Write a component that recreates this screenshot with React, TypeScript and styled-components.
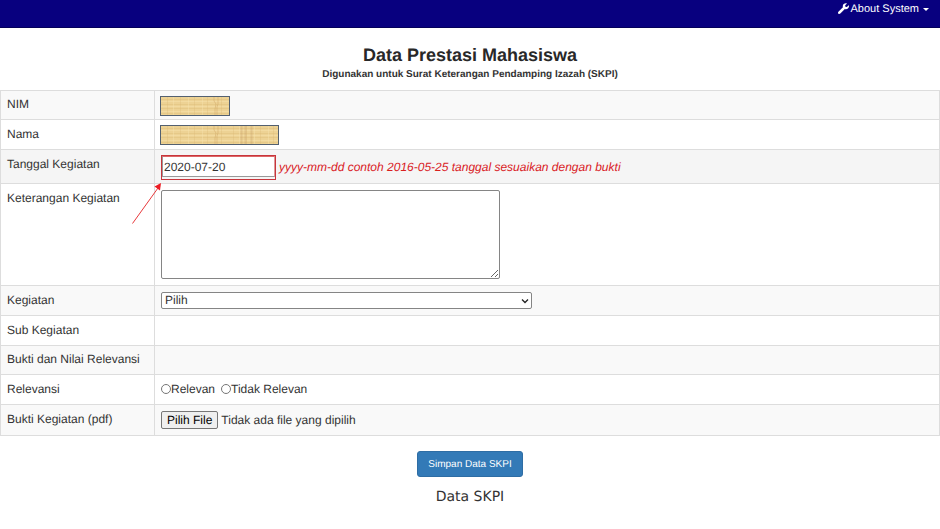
import React, { useRef, useState } from "react";
import styled, { createGlobalStyle } from "styled-components";

const GlobalStyle = createGlobalStyle`
  *, *::before, *::after { box-sizing: border-box; }
  body {
    margin: 0;
    background: #fff;
    color: #333;
    font: 12px/17px "Liberation Sans", Arial, sans-serif;
    text-rendering: geometricPrecision;
  }
  button, input, select, textarea {
    font: inherit;
    color: inherit;
    text-rendering: inherit;
  }
`;

const Navbar = styled.nav`
  display: flex;
  justify-content: flex-end;
  height: 28px;
  padding: 0 11px;
  background: #08007f;
  border-bottom: 1px solid #04005a;
`;

const MenuLink = styled.a`
  display: flex;
  align-items: center;
  gap: 2px;
  height: 18px;
  color: #fff;
  font-size: 11px;
  text-decoration: none;
`;

const Wrench = styled.svg`
  width: 11px;
  height: 11px;
  margin-bottom: 2px;
  fill: #fff;
`;

const Caret = styled.span`
  margin-left: 2px;
  border-top: 3px solid #fff;
  border-left: 3px solid transparent;
  border-right: 3px solid transparent;
`;

const Header = styled.header`
  padding: 15px 0 7px;
  text-align: center;
`;

const Title = styled.h1`
  margin: 0;
  color: #282828;
  font-size: 18px;
  line-height: 24px;
`;

const Subtitle = styled.p`
  margin: 0;
  font-size: 10px;
  line-height: 16px;
  font-weight: bold;
`;

const FormTable = styled.table`
  width: 100%;
  border-collapse: collapse;
`;

const LabelCell = styled.th`
  width: 154px;
  padding: 6px;
  border: 1px solid #ddd;
  font-weight: normal;
  text-align: left;
  vertical-align: top;
`;

const Cell = styled.td<{ $tight?: boolean }>`
  position: relative;
  padding: ${({ $tight }) => ($tight ? "5px 6px 3px" : "6px")};
  border: 1px solid #ddd;
  vertical-align: top;
`;

const Row = styled.tr<{ $tone?: "odd" | "hover"; $compact?: boolean }>`
  background: ${({ $tone }) =>
    $tone === "hover" ? "#f5f5f5" : $tone === "odd" ? "#f9f9f9" : "#fff"};

  ${LabelCell}, ${Cell} {
    ${({ $compact }) => $compact && "padding-top: 5px;"}
  }
`;

const Line = styled.div`
  display: flex;
  align-items: center;
`;

const Swatch = styled.svg<{ $wide?: boolean }>`
  display: block;
  width: ${({ $wide }) => ($wide ? "119px" : "70px")};
  height: 20px;
  margin-left: -1px;
`;

const DateFrame = styled.span`
  display: block;
  width: 115px;
  height: 25px;
  border: 1px solid #c8353b;
  padding-bottom: 2px;
`;

const DateInput = styled.input`
  display: block;
  width: 100%;
  height: 21px;
  padding: 0 1px;
  border: 1px solid #999;
  border-top-color: #d66;
  border-right-color: #d99;
  background: #fff;
  outline: none;
`;

const Hint = styled.em`
  margin-left: 3px;
  color: #d9201f;
`;

const Arrow = styled.svg`
  position: absolute;
  left: -24px;
  top: 31px;
  width: 32px;
  height: 44px;
  z-index: 1;
  pointer-events: none;
`;

const Description = styled.textarea`
  display: block;
  width: 339px;
  max-width: 100%;
  height: 89px;
  padding: 2px;
  border: 1px solid #858585;
  border-radius: 2px;
  background: #fff;
`;

const SelectBox = styled.span`
  display: grid;
  align-items: center;
  width: 371px;
  max-width: 100%;
`;

const Select = styled.select`
  grid-area: 1 / 1;
  appearance: none;
  width: 100%;
  height: 17px;
  padding: 0 3px;
  border: 1px solid #858585;
  border-radius: 2px;
  background: #fff;
  line-height: 15px;
`;

const Chevron = styled.svg`
  grid-area: 1 / 1;
  justify-self: end;
  width: 8px;
  height: 6px;
  margin-right: 3px;
  fill: none;
  stroke: #222;
  stroke-width: 1.3;
  pointer-events: none;
`;

const Choice = styled.label`
  display: flex;
  align-items: center;
  margin-right: 6px;
`;

const Radio = styled.input`
  appearance: none;
  width: 10px;
  height: 10px;
  margin: 0 0 2px;
  border: 1px solid #767676;
  border-radius: 50%;
  background: #fff;
  &:checked { border-color: #0075ff; background: #0075ff; box-shadow: inset 0 0 0 2px #fff; }
`;

const FileInput = styled.input`
  display: none;
`;

const FileButton = styled.button`
  height: 18px;
  margin-right: 3px;
  padding: 0 5px;
  border: 1px solid #767676;
  border-radius: 2px;
  background: #efefef;
  color: #000;
  line-height: 16px;
`;

const Footer = styled.footer`
  display: flex;
  flex-direction: column;
  align-items: center;
  gap: 11px;
  padding: 15px 0;
`;

const SaveButton = styled.button`
  height: 26px;
  padding: 0 10px;
  border: 1px solid #2e6da4;
  border-radius: 3px;
  background: #337ab7;
  color: #fff;
  font-size: 10px;
`;

const SectionTitle = styled.h2`
  margin: 0;
  font: 14px/18px "DejaVu Sans", Verdana, sans-serif;
`;

function Papyrus({ id, wide }: { id: string; wide?: boolean }) {
  const width = wide ? 119 : 70;
  return (
    <Swatch $wide={wide} viewBox={`0 0 ${width} 20`} aria-hidden="true">
      <defs>
        <pattern id={id} width="66" height="20" patternUnits="userSpaceOnUse">
          <rect width="66" height="20" fill="#edd294" />
          <path d="M0 3.5h66M0 8.5h66M0 12.5h66M0 17.5h66" stroke="#d9b36e" strokeOpacity=".3" />
          <path d="M0 5.5h66M0 10.5h66M0 15.5h66" stroke="#f8e4af" strokeOpacity=".45" />
          <path d="M7.5 0v20M20.5 0v20M34.5 0v20M47.5 0v20M61.5 0v20" stroke="#dcb875" strokeOpacity=".3" />
          <path d="M54 0v5l2 3-1 5v7M58 0v8l-1 3v9" fill="none" stroke="#c99c58" strokeOpacity=".4" />
          <path d="M13.5 0v20M28.5 0v20M42.5 0v20" stroke="#f8e4af" strokeOpacity=".4" />
        </pattern>
      </defs>
      <rect x=".5" y=".5" width={width - 1} height="19" fill={`url(#${id})`} stroke="#536070" />
      {wide && <path d="M81.5 1v18M85.5 1v18M91.5 1v18" stroke="#bd8e5a" strokeOpacity=".25" strokeWidth="2" />}
    </Swatch>
  );
}

export default function App() {
  const fileRef = useRef<HTMLInputElement>(null);
  const [fileName, setFileName] = useState("Tidak ada file yang dipilih");

  return (
    <>
      <GlobalStyle />
      <Navbar>
        <MenuLink href="#about">
          <Wrench viewBox="0 0 512 512" aria-hidden="true">
            <path d="M507 117c-2-9-14-12-21-5l-74 74-68-11-11-68 74-74c7-7 4-19-6-21C353 0 302 14 264 51c-40 40-52 99-35 152L19 413c-25 25-25 65 0 90 24 12 65 12 90-10l210-210c53 18 112 6 152-34 38-38 47-84 36-132z" />
          </Wrench>
          About System
          <Caret />
        </MenuLink>
      </Navbar>
      <main>
        <Header>
          <Title>Data Prestasi Mahasiswa</Title>
          <Subtitle>Digunakan untuk Surat Keterangan Pendamping Izazah (SKPI)</Subtitle>
        </Header>
        <form onSubmit={(e) => e.preventDefault()}>
          <FormTable>
            <tbody>
              <Row $tone="odd" $compact>
                <LabelCell scope="row">NIM</LabelCell>
                <Cell $tight><Papyrus id="papyrus-nim" /></Cell>
              </Row>
              <Row>
                <LabelCell scope="row">Nama</LabelCell>
                <Cell $tight><Papyrus id="papyrus-nama" wide /></Cell>
              </Row>
              <Row $tone="hover">
                <LabelCell scope="row"><label htmlFor="date">Tanggal Kegiatan</label></LabelCell>
                <Cell $tight>
                  <Line>
                    <DateFrame><DateInput id="date" type="text" defaultValue="2020-07-20" /></DateFrame>
                    <Hint>yyyy-mm-dd contoh 2016-05-25 tanggal sesuaikan dengan bukti</Hint>
                  </Line>
                  <Arrow viewBox="0 0 32 44" aria-hidden="true">
                    <path d="M1.5 42.5L27 7" stroke="#e8383b" fill="none" />
                    <path d="M30 2l-1 7.500-5.500-4z" fill="#ed1c24" />
                  </Arrow>
                </Cell>
              </Row>
              <Row>
                <LabelCell scope="row"><label htmlFor="description">Keterangan Kegiatan</label></LabelCell>
                <Cell><Description id="description" /></Cell>
              </Row>
              <Row $tone="odd">
                <LabelCell scope="row"><label htmlFor="activity">Kegiatan</label></LabelCell>
                <Cell>
                  <SelectBox>
                    <Select id="activity"><option>Pilih</option></Select>
                    <Chevron viewBox="0 0 8 6" aria-hidden="true"><path d="M1 1.500l3 3 3-3" /></Chevron>
                  </SelectBox>
                </Cell>
              </Row>
              <Row>
                <LabelCell scope="row">Sub Kegiatan</LabelCell>
                <Cell />
              </Row>
              <Row $tone="odd" $compact>
                <LabelCell scope="row">Bukti dan Nilai Relevansi</LabelCell>
                <Cell />
              </Row>
              <Row>
                <LabelCell scope="row">Relevansi</LabelCell>
                <Cell>
                  <Line>
                    <Choice><Radio type="radio" name="relevance" />Relevan</Choice>
                    <Choice><Radio type="radio" name="relevance" />Tidak Relevan</Choice>
                  </Line>
                </Cell>
              </Row>
              <Row $tone="odd">
                <LabelCell scope="row"><label htmlFor="proof">Bukti Kegiatan (pdf)</label></LabelCell>
                <Cell>
                  <Line>
                    <FileInput
                      ref={fileRef}
                      id="proof"
                      type="file"
                      accept="application/pdf"
                      onChange={(e) => setFileName(e.target.files?.[0]?.name ?? "Tidak ada file yang dipilih")}
                    />
                    <FileButton type="button" onClick={() => fileRef.current?.click()}>Pilih File</FileButton>
                    <span>{fileName}</span>
                  </Line>
                </Cell>
              </Row>
            </tbody>
          </FormTable>
          <Footer>
            <SaveButton type="submit">Simpan Data SKPI</SaveButton>
            <SectionTitle>Data SKPI</SectionTitle>
          </Footer>
        </form>
      </main>
    </>
  );
}
